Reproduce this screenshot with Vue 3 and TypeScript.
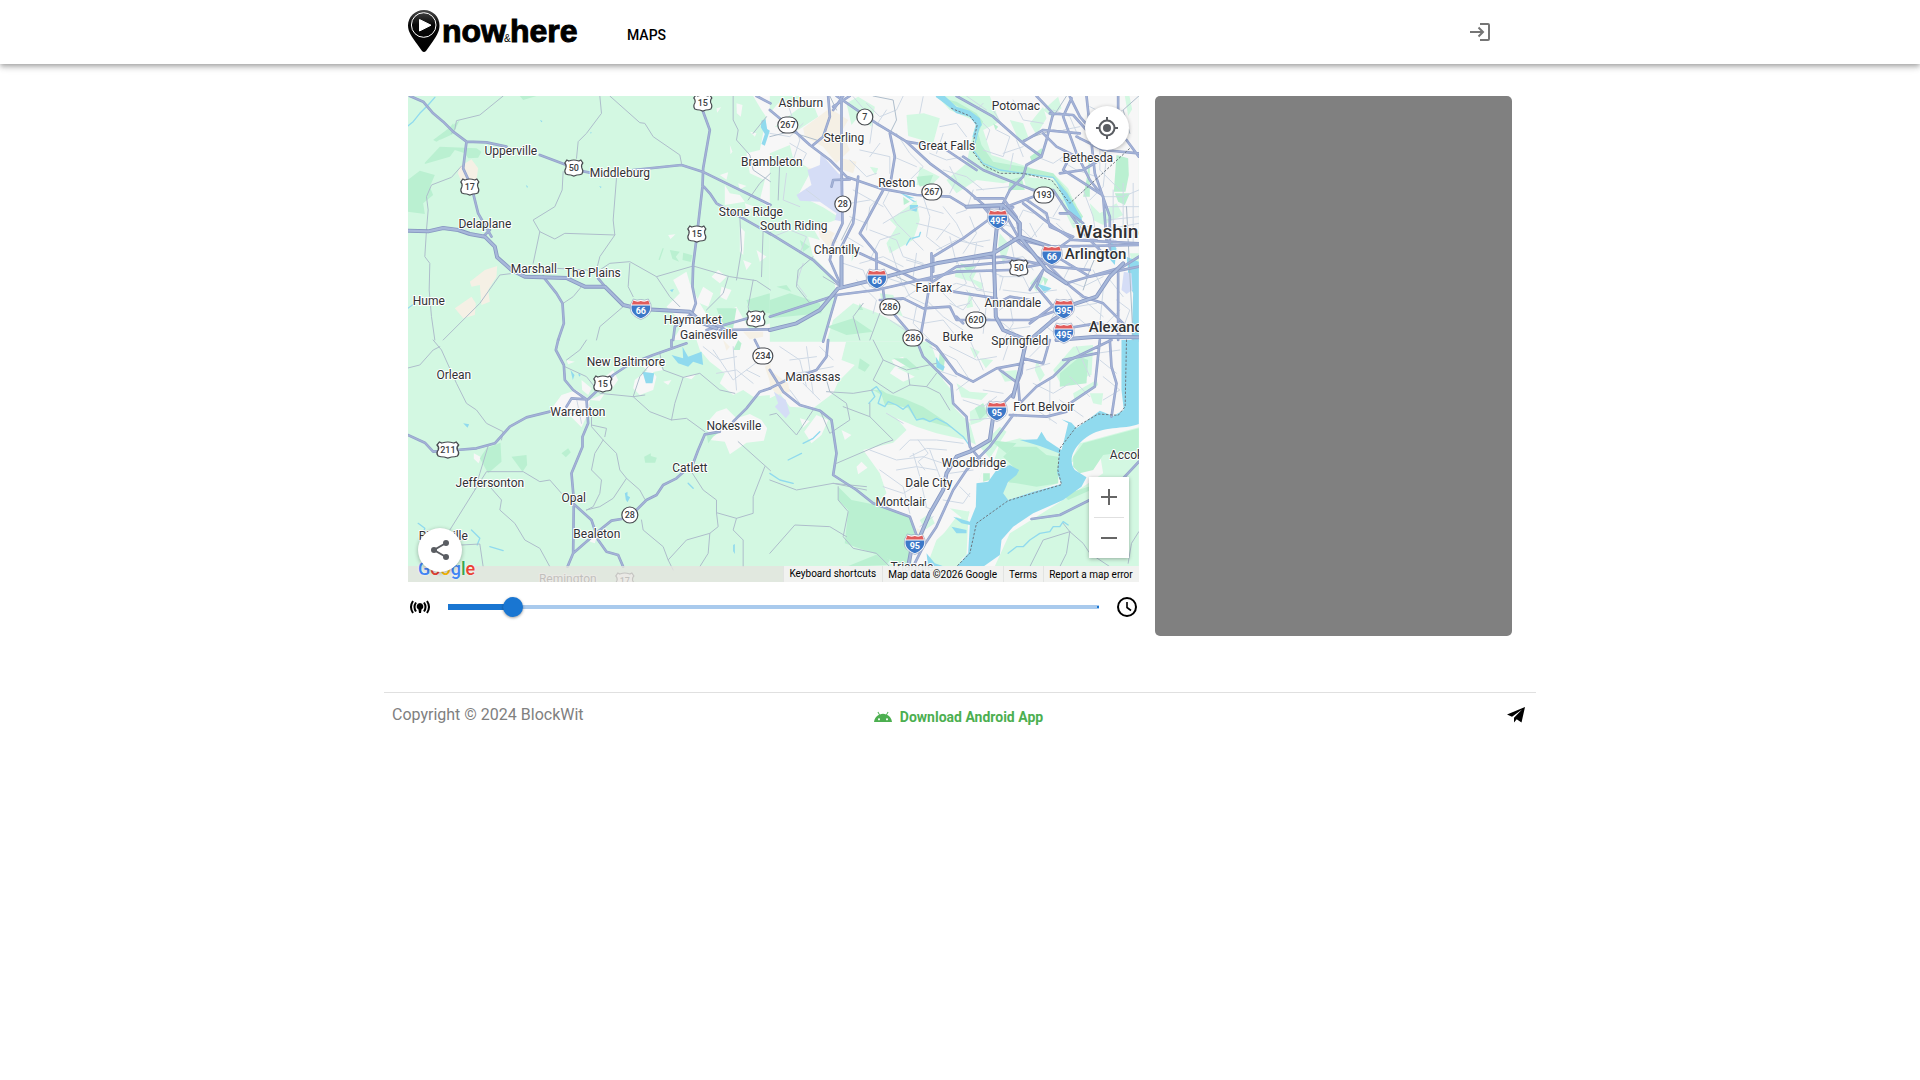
<script setup lang="ts">
import { ref } from 'vue'

type Sheet = 'nw' | 'ne' | 'sw' | 'se'
type ShieldKind = 'interstate' | 'us' | 'state'

interface Layer {
  name: string
  paths: Partial<Record<Sheet, string[]>>
}

interface Label {
  text: string
  x: number
  y: number
  size?: 'city' | 'capital'
  start?: boolean
}

interface Shield {
  kind: ShieldKind
  text: string
  x: number
  y: number
}

const range = ref(10)

/* The map is drawn in four survey sheets, each at three units to the pixel. */
const origins: Record<Sheet, string> = {
  nw: 'translate(-8 -6) scale(.33333)',
  ne: 'translate(362 -6) scale(.33333)',
  sw: 'translate(-8 244) scale(.33333)',
  se: 'translate(362 244) scale(.33333)',
}

const layers: Layer[] = [
  {
    name: 'urban',
    paths: {
      nw: [
        'M1060 18H1112V100L1085 60ZM1100 80L1112 70V360L1080 330L1095 270L1050 250L1040 190L1080 180Z',
        'M1010 40l18 5-5 35-12-10ZM950 55l14-3-12 16ZM1050 125l20 5-5 10ZM990 165l8 20-6 8ZM960 255l25-8-5 22ZM975 285l15 25 30 5 15 20-60 10ZM1015 280l25 8-20 10Z',
        'M820 750L850 700L800 650L840 610L820 570L860 545L870 580L900 640L930 690L1010 650L1050 720L1112 700V750Z',
        'M910 590l30 20-15 40-35-15ZM935 560l20-20 25 20-20 20ZM965 590l30 10-15 30-20-10ZM1020 410l15 15-5 70-10-10ZM1030 510l25 10-15 20ZM805 435l22-2-15 14ZM1070 480l30 20-20 15ZM1035 340l30 10-25 12Z',
      ],
      ne: ['M0 18H1107V755H0Z'],
      sw: [
        'M890 0H1112V165L1060 170L1030 150L1000 165L960 130L975 100L930 65L900 30Z',
        'M445 220L485 165L530 150L570 180L565 220L545 262L515 232Z',
        'M920 250L950 215L980 205L1010 235L1050 222L1085 240L1102 265L1092 302L1040 308L990 343L975 305L930 300Z',
        'M705 120l45-35 20 25-10 40-40 15-20-20ZM725 75l35-15 30 30-40 8ZM610 115l30-25 15 30-25 35ZM545 120l30 25-10 20-18-15ZM850 110l40-8-15 16ZM790 125l25-5-10 15ZM222 340l22 12-8 18-14-14ZM570 180l45-20-15 22ZM570 585l25-10-10 35-14-5ZM500 60l25 5-20 8Z',
      ],
      se: [
        'M0 0H230L215 60L255 75L205 125L190 160L130 205L60 200L30 160L0 175Z',
        'M480 0H1107V755H560L600 500L635 400L620 320L600 250L555 205L545 150L520 120L500 60Z',
        'M380 235L440 260L500 280L590 300L650 330L635 400L600 510L500 600L470 680L425 680L430 560L320 490L350 460L330 400L280 330L370 308L410 270Z',
        'M140 225l35 15-20 45-30 25-22-35ZM90 235l30 8-20 20ZM215 270l30 15-20 15ZM260 380l15-15 18 18-28 20ZM360 100l15-20 60 30-35 15ZM365 60l35-10 10 25-30 10Z',
      ],
    },
  },
  {
    name: 'meadow',
    paths: {
      ne: [
        'M0 18H90L70 55L25 40L0 70ZM0 190L60 165L70 205L125 240L85 315L160 352L212 385L130 415L150 450L115 440L130 500L190 560L200 610L160 755H0Z',
        'M170 755L190 690L250 640L325 670L400 710L430 755ZM410 75l52-5 48 15-20 75-75-22ZM230 40l35-20 50 30-10 60-40-30-20 25ZM80 60l45-30 20 50-60 40-70-10Z',
        'M500 18H660L690 95L640 120L665 195L780 232L780 260L700 280L620 270L560 310L530 270L590 220L610 130L620 95L540 60Z',
        'M850 250l45 45 45 110-30 10-50-100ZM760 260l100 10 20 55-30-15-80-15ZM780 100l40-50 10 35-30 50ZM960 340l30 30 50-30 20 35-60 30-30-15ZM720 90l40 10 15 40-25 20ZM440 330l10 60-20 60-70 40-10-30 30-50-20-20Z',
        'M690 430l30 35-20 60-15-60ZM560 530l60 15-15 30-50-15ZM590 560l50 20-5 20ZM780 580l30-30 15 15-25 40ZM600 600l10 50-20 5ZM450 230l60 30-30 30-40-5ZM330 610l40 5 30 65-60-25ZM1080 490h27v60h-15ZM820 60l45-40 10 35-30 25ZM1065 18l10 60 12-20-8-40ZM900 310l20 35-10 40-22-40ZM300 230l25 5-8 20ZM250 460l15 20-20 35Z',
      ],
      se: [
        'M560 130l40 25 55 5-20 20-60-8ZM600 20l30 15-15 20ZM630 55l40 5-22 25ZM690 95l50-5 5 30-40 5ZM600 215l40-25 22 35-30 20-30 10ZM630 320l60-60 20 15-50 80ZM690 310l60-15 120 40-5 95-150 50-25-20 40-50-60-40ZM560 530l35 15-5 100-30 25-60-60ZM900 370L930 310L1107 262V755H640L720 580L880 480L940 440L1000 400L990 340L940 350Z',
        'M870 600l80 10 60 60-130 20ZM910 160l70-40 5 15-70 50ZM850 90l60-70 60-5-5 90-90 30ZM960 160l40 0-5 35-25-5ZM450 540l30-20 15 30-30 20ZM540 505l60 10-10 30ZM800 60l25 45-15 20-15-35Z',
      ],
    },
  },
  {
    name: 'park',
    paths: {
      nw: [
        'M75 218L120 170L230 175L245 185L235 203L205 205L195 190L165 180L150 200L75 222ZM100 150L180 90L165 120L110 155Z',
        'M24 270L60 242L105 255L90 290L100 315L70 340L75 372L24 365Z',
        'M850 488l28 8-5 20-25-6ZM810 480l30 5-12 15 10 15-20-8ZM1040 630l70-20v60l-60-10ZM950 655l60 0-10 60-30-5ZM780 510l12-35-4 0-12 34Z',
        'M360 18h50l-40 12ZM160 100l-40 50 45-20Z',
      ],
      ne: [
        'M0 630L60 610L150 640L155 670L0 685ZM20 590l30-5 15 20ZM170 710l80-25 60 40-80 10ZM90 450l30 20-20 15Z',
        'M520 25L600 70L625 105L610 185L650 240L740 252L850 265L890 320L930 390L940 380L890 300L850 250L770 232L670 215L635 165L625 130L640 95L620 70L560 35ZM720 270l35-10 10 40-50 0ZM960 190l-10 80-10 50 20 0Z',
        'M1040 195l35 10 2 50-10 50-35 0ZM1035 310l45 0-15 35-20-10ZM440 260l50-5-10 25-30 10ZM780 200l35-25 8 10-35 35ZM570 520l50 10-25 15ZM670 100l15 10-8 10ZM270 640l10 20-15 0ZM400 320l20 15-18 10ZM820 560l15 8-10 20Z',
      ],
      sw: [
        'M260 325L302 308L305 365L265 400L240 355ZM335 350L380 345L382 375L368 395ZM485 340l20-15 8 12-15 15ZM733 350l20-10 0 8 18 5-5 15-30 0ZM920 280l40-5-20 15-15 20Z',
        'M1015 0l10 10-5 20-20 0Z',
      ],
      se: [
        'M205 440L245 480L320 495L420 530L440 600L410 680L340 650L225 610L235 510L205 480Z',
        'M310 150L335 165L345 195L375 195L415 205L435 235L480 245L550 265L520 240L460 200L400 175L350 160L335 150ZM370 55l40 0 40 35-30-5ZM270 55l30 20-15 20-20-10ZM510 35l15 25-5 35-15-10ZM230 680l100-40 30 20-10 15Z',
        'M730 320L800 320L830 345L865 350L865 430L800 440L740 430L700 425L740 390L700 350ZM910 350L940 310L1107 265V330L1000 345L970 390L930 400L910 380ZM880 465l75-25 20 5-80 35ZM870 100l60-50 25 10-5 70-80 10ZM660 300l80 10-30 30ZM615 205l25-15 10 30-20 20ZM640 400l20 0 0 20-20 5Z',
      ],
    },
  },
  {
    name: 'sand',
    paths: {
      nw: [
        'M180 230L215 208L235 235L230 270L185 275L174 250ZM210 575L255 540L292 528L290 560L265 600L270 635L245 645L240 585L215 590ZM165 655L215 620L228 640L225 675L190 685Z',
        'M1030 725l60 0 0 15-40 8Z',
      ],
      ne: ['M100 115L180 55L235 90L215 125L240 180L200 220L160 170L105 140ZM215 205l45 10-10 35-30-10ZM145 405l50 25-10 15 20 10-30 15-25-30ZM110 230l30 10-10 15Z'],
      sw: ['M970 0l20 20-10 12ZM1095 80l17-10v60Z'],
      se: ['M0 90L55 130L60 155L20 165L0 135Z', 'M440 565l25 10-15 35Z'],
    },
  },
  {
    name: 'field',
    paths: {
      ne: [
        'M152 190L205 250L222 262L220 395L195 390L200 370L150 335L90 332L80 315L125 285L113 240L150 225Z',
        'M1010 450h30v20h-30Z',
      ],
      se: ['M12 155L25 190L15 200L48 235L60 220L48 180Z'],
    },
  },
  {
    name: 'water',
    paths: {
      nw: ['M1085 92l12-5 5 30 8 5-15 45-10-5 10-30-12-20ZM378 285l6 4-2 6ZM598 288l7 2-2 5ZM420 90l8 3-3 4ZM572 125l4 3-4 3ZM810 600l12-3-5 10Z'],
      ne: [
        'M498 18H525L560 50L600 62L630 85L636 105L620 125L622 150L608 140L618 105L600 80L560 70ZM860 275L890 310L905 335L935 385L930 400L900 365L870 300ZM1070 500L1107 515V755H1085L1090 610L1072 570L1075 540ZM1025 455l15 20-5 50-18-20Z',
        'M385 305l50 20-20 0ZM420 345l25 0-5 20-20-5ZM410 320l30 15-10 0ZM800 580l45 15-20 15Z',
      ],
      sw: ['M815 45L850 55L848 20L865 50L905 35L910 75L880 65L865 80L835 70ZM728 95l35 5-5 30-20 0ZM675 460l8-5 0 12 8 5-8 15-5-8ZM512 90l12 15-5 15ZM535 100l8 5-5 5ZM190 250l18 3-5 10ZM1000 615l5-3 0 30-5-8Z'],
      se: [
        'M1055 0H1107V252C1060 270 1000 255 950 292C905 325 895 365 915 390L950 412L935 440L880 480L790 520L730 560L695 600L690 645L640 680H560L595 640L600 555L575 550L550 530L600 545L618 500L620 430L655 425L680 390L720 375L748 390L740 405L715 425L700 460L715 480L790 455L875 432L862 400L868 340L810 318L750 300L802 298L815 275L830 300L875 330L885 292L895 250L875 238L905 248L920 265L960 235L990 212L1030 228L1062 210L1055 150ZM470 640l25 30 30 10h-50Z',
        'M498 50l12 20 15 10-5 12-20-10ZM545 560l45 10 0 10-30 0Z',
      ],
    },
  },
  {
    name: 'field',
    paths: {
      ne: ['M1062 545L1085 550L1088 600L1070 612L1055 600Z'],
    },
  },
  {
    name: 'creek',
    paths: {
      nw: ['M24 108L40 95L60 70L85 45L105 22', 'M24 655L45 640'],
      ne: ['M500 20L560 62L610 82L628 110L610 180L640 220L690 240L760 250L850 262L890 310L935 390', 'M410 465l10-18 28-8 4-12'],
      sw: ['M55 550l20 15-5 15 20 5M215 570l25 25-8 20M865 430l15 15M270 620l40 12'],
      se: [
        'M297 190L315 170L305 150L320 140L335 160L325 190L345 200L355 185L380 195L400 208L415 195L440 240L460 235L480 245L500 235L530 250L580 290L605 325',
        'M895 555L880 545L870 560L850 560L840 575L810 580L780 600L760 620L740 620L715 640',
        'M0 400l30 20 40 10M100 310l30-15 20-20M55 360l40-20',
      ],
    },
  },
  {
    name: 'street',
    paths: {
      ne: [
        'M0 130L60 140L100 100M50 30L90 150L70 210M250 20L310 90L300 160M270 180L360 200L360 250M240 210L290 260L320 250M290 40L330 80L380 60L400 18M330 160L300 200M380 130L420 190L460 230L420 270M370 200L440 230M350 60l-30 45 40 20',
        'M460 20L450 70M510 110L560 100L590 140M480 190L530 210L580 200M520 240L590 260L640 300M610 300L590 360L560 370M540 230L560 270L540 310M620 300L720 290M640 180L700 200L720 140L680 120M700 110L670 60M700 190L760 170M590 18L650 60M640 100L660 120L650 150',
        'M340 310L300 350L290 420M360 300L340 340L380 400L460 480M300 420L380 450L400 500L460 520M340 400L390 370L450 350L520 370M460 320L480 380L470 440L520 480M520 350L560 400L580 440M440 400L520 420L600 460L660 450M500 480L560 450L640 470M390 430L330 450L300 510M240 340L300 330M250 300L340 350M270 520L340 500L400 530M360 470L400 590M540 400L500 450M600 380L620 430L580 490',
        'M220 520L280 540L300 590M230 440L280 470M50 250L40 330L90 350M60 160L110 190L90 230M110 300L150 330M10 440L60 420L110 440L90 490M100 520L80 580L110 620',
        'M690 400L760 420L800 460M700 510L760 500L790 540M690 560L760 560L780 600M720 440L740 540M640 490L600 560L620 600L680 610M700 600L780 610L860 600M610 620L580 660L540 640M690 660L740 620L770 640M500 600L560 580L640 600M340 560L400 580L420 620L480 650M380 640L440 600M470 630L520 680L580 720M520 610L560 650L600 640M400 680L460 700L520 690L560 740M640 680L700 700L760 750M700 720L780 710M630 550L650 640L640 730M560 510L590 580L540 610',
        'M800 200L850 220L880 200M760 200L740 150M850 60L900 80L930 150M780 330L830 380L870 390M870 210L920 240L980 260M880 120L930 110M990 150L990 240L1050 300M1010 200L1000 290L960 330M910 400L1000 420L1107 400M940 300L970 380L980 450M1000 320L1060 320L1107 300M1010 350H1107M1010 390L1107 380M1030 300V460M1060 280V420M1090 280V460M980 120L1030 100L1070 120M960 50L1020 80L1060 60M790 370L760 360L740 400M820 400L780 450M850 490L900 530L880 570M860 560L940 590L1000 560M890 600L920 650L980 640M830 620L860 660L830 710L880 750M930 620L1000 680M970 540L1000 600L990 700M1020 570L1060 620M920 680L980 730M1040 630L1080 660L1050 740M970 480L940 540',
        'M260 570L320 630L310 670M440 490L430 560M240 380L290 400M410 510L480 530M540 440L560 520M620 460L610 520M650 540L700 560L690 600M780 400L800 440M860 400L900 440M730 190L720 240M880 330L850 380M1000 500L1050 490M1050 660L1000 710M590 600L630 660L600 700M720 640L730 700L700 750M440 650L430 700L480 750M360 690L420 730M560 160L600 170M520 130L500 190M640 40L620 60M730 30L760 90L820 100',
      ],
      se: [
        'M30 20L90 60L110 140M60 60L140 50M80 100L190 80M100 130L150 180M110 20L130 160M60 150L90 190M150 20L190 60M480 20L560 60L600 120L560 150M500 90L560 110M540 20L620 60L680 50M600 0L640 90M640 150L700 160M580 180L640 200L680 170M600 240L660 235M720 0L700 60M700 90L740 130M770 90L840 70M780 50L830 0M790 130L850 160L900 130M840 120V240M870 180L940 230M900 110L960 170M920 20L960 110M980 40L1050 30M1000 110L1050 150L1000 180M990 60L1040 100M800 210L860 250',
        'M300 330L380 360L460 350L520 370M390 330L420 300L500 300L580 310M380 390L440 380L500 390M340 440L400 460L470 420M330 390L400 440L420 520M430 340L450 410L470 500M480 330L510 410M520 480L580 490L600 460M570 440L600 470M440 490L490 510M540 400L610 390M450 560L490 530M400 250L350 220M420 350l50-25 60 5M445 300l30 40-30 25 20 25',
      ],
      sw: ['M910 20L960 60L1010 50M950 100L1010 90L1060 130M940 30L1000 120L1080 60M1000 20L1010 150M1040 90L1080 110M530 175L545 250M500 215L540 230'],
    },
  },
  {
    name: 'lane',
    paths: {
      nw: [
        'M310 18L240 75L170 92L165 118L155 130M600 18L605 70L560 130L535 155L530 205M490 245L487 300L465 350L400 390L420 425L400 520M420 425L465 447L495 430L645 435L640 390L650 265M645 435L600 500L590 540M630 18L720 98L735 100L760 140L840 195L845 220',
        'M185 228L155 262L95 285L80 320L85 360L80 420L75 500L90 520L88 600L95 680L105 750M130 750L190 690L240 640L300 555L340 550M470 535L560 540L600 555M600 540L630 520L690 515L770 560L880 528M770 560L810 620L840 650M690 520L685 590L700 620M670 650L600 710L590 750M545 590L520 620L490 640M985 560L970 610L920 660M1060 570L1045 650L1050 680M1000 18L1000 90L1015 120L1010 150L1050 195L1060 240L1112 275M1045 330L1080 280L1112 250M880 528L990 560L1070 572L1112 600M1100 80L1060 130M1020 380L1025 480L1010 570M1090 420L1085 560',
      ],
      ne: [
        'M0 140L60 125L140 150M30 210L25 330M310 18L370 30L380 90L360 130M180 18L200 60M260 290L250 380L215 450M130 500L85 540L80 590L120 640M280 640L250 680L270 750M330 670L300 750M160 560L210 590M380 560L440 590',
        'M1107 18L1060 60L1080 130M890 18L850 80M760 150L850 120L930 130M1070 350L1090 750M990 470L960 540L940 600',
      ],
      sw: [
        'M100 0L125 30L170 130L200 190L230 210L260 250L310 275L305 300M24 84L60 75L100 30L120 20M265 318L240 400L225 450L150 570M225 450L260 395L370 395L420 425L450 420L485 460M270 440L305 480L300 510L345 550L375 600L420 625L450 680',
        'M500 60L540 30L560 0M495 80L560 110L600 160L700 170L750 215L815 240L860 235L915 275M735 165L700 170M850 112L825 190L815 240M780 40L790 90L850 112L900 100L960 150L1005 160M610 300L585 340L575 390L605 420L600 460L580 500L560 510M575 210V260L610 300L650 340L660 390L680 415L720 450L735 478M680 415L640 475L600 500L560 510M575 255L620 265L615 290',
        'M1015 305L1112 392M1095 380L1060 470L1060 520L1010 535L950 518M878 400L910 450L950 480L950 518L955 560L930 580L860 600L805 660L820 690M725 540L730 570L790 620L805 660M930 580L925 640L900 680M1010 535L1000 570L1030 600L1030 680M185 615L240 612L250 680M700 170L720 110L745 80',
      ],
      se: [
        'M130 210L80 285L20 220L0 225M150 210L180 280L240 240L230 190L180 155L170 120M220 200L300 230L370 300L340 310L200 370M170 155L250 160L310 150M310 0L340 60L410 90L500 70M340 60L310 120L370 160L420 135L470 140L500 100M300 230L300 190M420 135L415 100M470 140L510 160L540 210M205 440L205 480L235 515L220 590L250 625L320 640L360 680M0 420L80 450L190 430L290 440M0 640L75 555L180 560L230 590M190 430L290 450',
        'M900 575L820 600L780 680M900 575L890 640L870 680M900 575L940 610L960 640L1020 680M900 575L880 550M1107 575L1085 610L1075 670',
      ],
    },
  },
  {
    name: 'road',
    paths: {
      nw: [
        'M30 18L70 35L100 70L130 95L160 125L200 155L190 235L215 290L235 370L275 440M200 155L260 157L320 170M420 195L500 225M545 243L570 248M700 240L845 225L908 245L1112 345M908 60L930 120L910 235L908 290L892 430L880 525L878 590L888 640L875 675M912 290L930 310L950 340L1112 432',
        'M430 560L470 610L488 640L492 700L475 750M595 565L620 595M920 720L1060 680M960 720L1112 718M820 750L825 710L870 675M250 440L270 420M1070 18L1112 40M940 700L1000 730',
      ],
      ne: [
        'M0 60L60 110L120 165L180 210L230 260L330 295L440 315L540 320L590 350L730 352M175 18L180 80L160 140L130 165M190 60L220 18M215 18L215 240L218 400L190 460L180 510L215 590M200 18L320 100L410 155L480 220L590 300L660 360',
        'M340 300L270 430L320 490L320 550M265 260L250 400L215 470M360 130L375 200L360 290M270 490L380 540L440 570L480 570M0 430L130 510L215 590M0 680L200 615L320 600L560 545L720 540',
        'M490 545L490 500L580 445L655 390M560 18L670 80L760 160L815 200M800 18L850 70L830 150L815 200L770 225L760 260L720 300L695 350M580 200L640 240L700 265L790 300M760 155L820 120L930 130M840 70L910 75L950 120M900 20L930 80L1000 160M905 25L880 80L920 190L960 270L1000 320L1010 450M950 18L975 250L1020 380V480',
        'M900 200L880 240L990 310M870 250L940 240L990 210M790 300L850 300L890 360L940 400M710 350L790 320M760 340L850 410L910 450L1107 460M615 325H700L740 380L750 440M640 350L700 420L800 500L850 530L960 540M700 360L750 450M750 450L840 470L1107 465M560 510L700 500L800 520L900 450L980 450',
        'M485 490V570M550 605L680 625M720 540L830 520L890 580L940 620L1000 640L1060 700M780 600L820 540L800 590L850 650M830 520L860 500L960 560L1107 530M890 580L1060 530L1107 500M650 690L780 690L880 655M680 640L720 620L780 630M620 690L560 690L540 650L460 655L400 625L330 630M340 600L345 640L430 740M560 680L580 700M480 580L470 640L450 750M1045 18V160M1045 540V750M860 720L980 700L1060 720M780 700L860 640',
        'M160 755L200 615M190 270L185 290M190 270L240 268M240 18L190 50M1070 150L1107 200M920 140L1000 180L1107 190M770 330L830 370L840 410L910 440M870 370L900 370L950 440L1000 490M820 130L860 170L920 200M410 155L470 165M530 180L620 240M480 580L560 530L720 515',
      ],
      sw: [
        'M24 285L75 308L100 335L170 330L230 325L285 310L330 260L380 232L450 215M500 200L515 175L560 178M565 178L600 145L640 105L690 72L760 45L860 10M475 0L468 30L492 75L495 120L520 150L560 178L565 250L548 290L548 320L515 400L522 480L520 640L503 680M525 495L575 540L595 600L620 635L655 645L670 680M520 640L600 570L635 542L665 537M710 510L740 480L770 465L790 435L830 415L880 370L895 330L915 283L960 275M1000 245L1040 205L1080 155L1112 145M815 0V20M1065 0L1080 30',
      ],
      se: [
        'M0 90L40 155L90 195L150 212L185 240L200 340L190 405L260 450L310 490L420 530L440 585M60 120L140 90L170 50L175 0M0 145L50 120M440 0L460 50L545 135L550 190L590 230L600 320L640 370M470 0L500 20L560 100L610 125L680 85L760 70M765 0L755 100L730 160L700 190M690 90L745 130L750 190L800 140L850 110L900 60L1025 0M990 0L975 140L900 190M1020 0L1025 80L1040 130L1025 230M720 225L830 230L890 215M760 55L820 70L840 0M730 225L660 320L590 390L550 450L500 560L460 620L430 680',
        'M785 537L870 525L960 480M1060 415L1107 365M880 60L980 40',
      ],
    },
  },
  {
    name: 'freeway',
    paths: {
      nw: ['M24 422L85 424L130 414L175 420L210 432L255 440L285 470L292 502L335 540L375 560L500 564L555 590L615 590L670 645L700 652M740 658L870 665L910 700L950 715'],
      ne: ['M0 720L80 700L150 660L205 595L330 565L500 520L670 490L750 440L870 480M695 350L680 420L672 500L678 680L700 720L770 750M590 350L700 345L750 400L750 440M750 440L790 490L830 540L890 580M1060 520L1020 560L980 620L890 650M880 670L850 690L780 750M860 750L980 740L1107 742M215 590V500'],
      se: ['M770 0L750 90L730 170M670 230L660 300L600 335L560 350L530 400L520 450L480 520L450 590L445 600M430 600L415 680'],
    },
  },
]

const sheetNames: Sheet[] = ['nw', 'ne', 'sw', 'se']

const boundaries: Partial<Record<Sheet, string>> = {
  ne: 'M545 55L600 78L622 105L605 180L640 225L690 250L760 250L845 270L900 340L1080 175',
  se: 'M1070 0L1066 200L1045 226L985 222L920 260L870 325L864 390L875 434L715 482L620 550L600 640L560 680',
}

const shields: Shield[] = [
  { kind: 'us', text: '15', x: 295, y: 7 },
  { kind: 'us', text: '50', x: 166, y: 72 },
  { kind: 'us', text: '17', x: 62, y: 91 },
  { kind: 'us', text: '15', x: 289, y: 138 },
  { kind: 'us', text: '29', x: 348, y: 223 },
  { kind: 'us', text: '50', x: 611, y: 172 },
  { kind: 'us', text: '15', x: 195, y: 288 },
  { kind: 'us', text: '211', x: 40, y: 354 },
  { kind: 'us', text: '17', x: 217, y: 485 },
  { kind: 'state', text: '267', x: 380, y: 29 },
  { kind: 'state', text: '7', x: 457, y: 21 },
  { kind: 'state', text: '28', x: 435, y: 108 },
  { kind: 'state', text: '267', x: 524, y: 96 },
  { kind: 'state', text: '193', x: 636, y: 99 },
  { kind: 'state', text: '286', x: 482, y: 211 },
  { kind: 'state', text: '620', x: 568, y: 224 },
  { kind: 'state', text: '286', x: 505, y: 242 },
  { kind: 'state', text: '234', x: 355, y: 260 },
  { kind: 'state', text: '28', x: 222, y: 419 },
  { kind: 'interstate', text: '66', x: 233, y: 213 },
  { kind: 'interstate', text: '495', x: 590, y: 123 },
  { kind: 'interstate', text: '66', x: 644, y: 159 },
  { kind: 'interstate', text: '66', x: 469, y: 183 },
  { kind: 'interstate', text: '395', x: 656, y: 213 },
  { kind: 'interstate', text: '495', x: 656, y: 237 },
  { kind: 'interstate', text: '95', x: 589, y: 315 },
  { kind: 'interstate', text: '95', x: 507, y: 448 },
]

const labels: Label[] = [
  { text: 'Upperville', x: 103, y: 59 },
  { text: 'Middleburg', x: 212, y: 81 },
  { text: 'Delaplane', x: 77, y: 132 },
  { text: 'Marshall', x: 126, y: 177 },
  { text: 'The Plains', x: 185, y: 181 },
  { text: 'Hume', x: 21, y: 209 },
  { text: 'Haymarket', x: 285, y: 228 },
  { text: 'Gainesville', x: 301, y: 243 },
  { text: 'Stone Ridge', x: 343, y: 120 },
  { text: 'Brambleton', x: 364, y: 70 },
  { text: 'Ashburn', x: 393, y: 11 },
  { text: 'Sterling', x: 436, y: 46 },
  { text: 'Great Falls', x: 539, y: 54 },
  { text: 'Potomac', x: 608, y: 14 },
  { text: 'Bethesda', x: 680, y: 66 },
  { text: 'Reston', x: 489, y: 91 },
  { text: 'South Riding', x: 386, y: 134 },
  { text: 'Chantilly', x: 429, y: 158 },
  { text: 'Fairfax', x: 526, y: 196 },
  { text: 'Annandale', x: 605, y: 211 },
  { text: 'Washington', x: 668, y: 142, size: 'capital', start: true },
  { text: 'Arlington', x: 657, y: 163, size: 'city', start: true },
  { text: 'Alexandria', x: 681, y: 236, size: 'city', start: true },
  { text: 'Burke', x: 550, y: 245 },
  { text: 'Springfield', x: 612, y: 249 },
  { text: 'Orlean', x: 46, y: 283 },
  { text: 'New Baltimore', x: 218, y: 270 },
  { text: 'Warrenton', x: 170, y: 320 },
  { text: 'Nokesville', x: 326, y: 334 },
  { text: 'Jeffersonton', x: 82, y: 391 },
  { text: 'Opal', x: 166, y: 406 },
  { text: 'Catlett', x: 282, y: 376 },
  { text: 'Bealeton', x: 189, y: 442 },
  { text: 'Rixeyville', x: 11, y: 444, start: true },
  { text: 'Remington', x: 160, y: 487 },
  { text: 'Manassas', x: 405, y: 285 },
  { text: 'Woodbridge', x: 566, y: 371 },
  { text: 'Dale City', x: 521, y: 391 },
  { text: 'Montclair', x: 493, y: 410 },
  { text: 'Fort Belvoir', x: 636, y: 315 },
  { text: 'Accokeek', x: 702, y: 363, start: true },
  { text: 'Triangle', x: 504, y: 475 },
]
</script>

<template>
  <div class="page">
    <header class="header">
      <div class="header-inner">
        <a class="logo" href="#" aria-label="now&amp;here">
          <svg width="172" height="44" viewBox="0 0 172 44">
            <defs>
              <linearGradient id="pin-shade" x1="0" y1="0" x2="0" y2="1">
                <stop offset="0" stop-color="#4a4a4a" />
                <stop offset=".35" stop-color="#080808" />
                <stop offset="1" stop-color="#000" />
              </linearGradient>
            </defs>
            <path d="M16 0C7 0 0 7 0 15.500C0 22 4 27 9 34L14 41Q16 43 18 41L23 34C28 27 31.500 22 31.500 15.500C31.500 7 25 0 16 0Z" fill="url(#pin-shade)" />
            <circle cx="15.700" cy="15" r="12.300" fill="none" stroke="#fff" stroke-width="1" />
            <path d="M11.500 9.500L23 15.200L11.500 21Z" fill="#fff" stroke="#fff" stroke-linejoin="round" />
            <text class="wordmark" x="34" y="32">now</text>
            <text class="ampersand" x="96" y="32">&amp;</text>
            <text class="wordmark" x="102" y="32">here</text>
          </svg>
        </a>
        <nav><a class="nav-link" href="#">MAPS</a></nav>
        <button class="login" type="button" aria-label="Log in">
          <svg width="20" height="18" viewBox="0 0 20 18" fill="none" stroke="#757575" stroke-width="2">
            <path d="M10 1H18Q19 1 19 2V16Q19 17 18 17H10M0 9H13M8.500 4.500L13 9L8.500 13.500" />
          </svg>
        </button>
      </div>
    </header>

    <main class="content">
      <section class="column column-map">
        <div class="map">
          <svg class="map-canvas" viewBox="0 0 731 486" preserveAspectRatio="xMidYMid slice">
            <rect width="731" height="486" fill="#d3f8e2" />
            <g v-for="(layer, n) in layers" :key="n" :class="layer.name">
              <g v-for="name in sheetNames" :key="name" :transform="origins[name]">
                <path v-for="(d, i) in layer.paths[name] ?? []" :key="i" :d="d" />
                <template v-if="layer.name === 'freeway' || layer.name === 'road'">
                  <path v-for="(d, i) in layer.paths[name] ?? []" :key="'in' + i" class="inner" :d="d" />
                </template>
              </g>
            </g>
            <g class="boundary">
              <path v-for="(d, name) in boundaries" :key="name" :d="d" :transform="origins[name as Sheet]" />
            </g>
            <g v-for="(s, i) in shields" :key="i" :transform="`translate(${s.x} ${s.y})`">
              <g v-if="s.kind === 'interstate'">
                <path d="M-7.500-10Q-4-8 0-9.500Q4-8 7.500-10Q11-5 10.500 0C10 5 6 8 0 10.500C-6 8-10 5-10.500 0Q-11-5-7.500-10Z" fill="#fff" stroke="#8795b5" stroke-width=".6" />
                <path d="M-9.200-3.500H9.200C10.500 4 5 7 0 9.300C-5 7-10.500 4-9.200-3.500Z" fill="#3c78c8" />
                <path d="M-7.500-8.500Q-4-6.500 0-8Q4-6.500 7.500-8.500L9-4.500H-9Z" fill="#e05c5c" />
                <text class="shield-text light" y="5">{{ s.text }}</text>
              </g>
              <g v-else-if="s.kind === 'us'">
                <path
                  :transform="s.text.length > 2 ? 'scale(1.2 1)' : undefined"
                  d="M-7-8L-5-7Q-2-8 0-8Q2-8 5-7L7-8L9-5Q7-3 8 0Q10 3 8 6Q6 7 3 7L0 8L-3 7Q-6 7-8 6Q-10 3-8 0Q-7-3-9-5Z"
                  fill="#fff"
                  stroke="#484b50"
                  stroke-width="1.200"
                />
                <text class="shield-text" y="3">{{ s.text }}</text>
              </g>
              <g v-else>
                <rect
                  :x="s.text.length > 2 ? -10 : -8"
                  y="-8"
                  :width="s.text.length > 2 ? 20 : 16"
                  height="16"
                  rx="8"
                  fill="#fff"
                  stroke="#484b50"
                  stroke-width="1.200"
                />
                <text class="shield-text" y="3">{{ s.text }}</text>
              </g>
            </g>
            <text
              v-for="label in labels"
              :key="label.text"
              :class="['place', label.size, { start: label.start }]"
              :x="label.x"
              :y="label.y"
            >{{ label.text }}</text>
          </svg>

          <div class="attribution">
            <button type="button">Keyboard shortcuts</button>
            <span>Map data ©2026 Google</span>
            <a href="#">Terms</a>
            <a href="#">Report a map error</a>
          </div>
          <a class="google" href="#" aria-label="Google">
            <span class="blue">G</span><span class="red">o</span><span class="yellow">o</span><span class="blue">g</span><span class="green">l</span><span class="red">e</span>
          </a>
          <button class="round locate" type="button" aria-label="My location">
            <svg width="22" height="22" viewBox="0 0 22 22" fill="none" stroke="#5a5d62" stroke-width="2">
              <circle cx="11" cy="11" r="7.500" />
              <circle cx="11" cy="11" r="4" fill="#5a5d62" stroke="none" />
              <path d="M11 0V4M11 18V22M0 11H4M18 11H22" />
            </svg>
          </button>
          <button class="round share" type="button" aria-label="Share">
            <svg width="20" height="22" viewBox="0 0 20 22" fill="#5a5d62">
              <path d="M16 4L4 11L16 18" fill="none" stroke="#5a5d62" stroke-width="2" />
              <circle cx="16" cy="4" r="3" /><circle cx="4" cy="11" r="3" /><circle cx="16" cy="18" r="3" />
            </svg>
          </button>
          <div class="zoom">
            <button type="button" aria-label="Zoom in">
              <svg width="16" height="16" viewBox="0 0 16 16"><path d="M0 8H16M8 0V16" stroke="#666" stroke-width="2" /></svg>
            </button>
            <button type="button" aria-label="Zoom out">
              <svg width="16" height="16" viewBox="0 0 16 16"><path d="M0 8H16" stroke="#666" stroke-width="2" /></svg>
            </button>
          </div>
        </div>

        <div class="timeline">
          <svg width="24" height="24" viewBox="0 0 24 24" fill="none" stroke="#000" stroke-width="2">
            <path d="M5 6Q1 12 5 18M19 6Q23 12 19 18M8 7.500Q5 12 8 16.500M16 7.500Q19 12 16 16.500" />
            <path d="M12 8A3.500 3.500 0 0 1 13.500 14.600L13 18H11L10.500 14.600A3.500 3.500 0 0 1 12 8Z" fill="#000" stroke="none" />
          </svg>
          <div class="track" :style="{ '--filled': range + '%' }">
            <input v-model.number="range" type="range" min="0" max="100" aria-label="Time range" />
          </div>
          <svg width="24" height="24" viewBox="0 0 24 24" fill="none" stroke="#000" stroke-width="2">
            <circle cx="12" cy="12" r="9" />
            <path d="M12 7V12.500L16 15.500" stroke-width="1.600" />
          </svg>
        </div>
      </section>
      <section class="column column-panel">
        <div class="panel"></div>
      </section>
    </main>

    <footer class="footer">
      <span class="copyright">Copyright © 2024 BlockWit</span>
      <a class="download" href="#">
        <svg width="18" height="18" viewBox="0 0 18 18" fill="#4caf50">
          <path fill-rule="evenodd" d="M0 14Q.5 9 5 6.800L3.500 4.200L4.300 3.800L5.900 6.400Q9 5.200 12.100 6.400L13.700 3.800L14.500 4.200L13 6.800Q17.500 9 18 14ZM5 10.200a1 1 0 1 0 .01 0ZM13 10.200a1 1 0 1 0 .01 0Z" />
        </svg>
        Download Android App
      </a>
      <a class="telegram" href="#" aria-label="Telegram">
        <svg width="18" height="16" viewBox="0 0 18 16">
          <path d="M18 0L0 7.500L5 9.700L15 2.500L7 10.700V15.500L9.700 12.200L14.500 15.500Z" />
        </svg>
      </a>
    </footer>
  </div>
</template>

<style>
body {
  margin: 0;
  background: #fff;
}
</style>

<style scoped>
.page {
  font-family: Roboto, 'Liberation Sans', sans-serif;
  font-size: 14px;
  line-height: 20px;
  color: #000;
}
.page *,
.page *::before {
  box-sizing: border-box;
}
a {
  color: inherit;
  text-decoration: none;
}
button {
  display: flex;
  align-items: center;
  justify-content: center;
  padding: 0;
  border: 0;
  background: none;
  font: inherit;
  color: inherit;
  cursor: pointer;
}
svg {
  display: block;
  flex: none;
}
.header {
  box-shadow:
    0 2px 4px -1px rgba(0, 0, 0, 0.2),
    0 4px 5px rgba(0, 0, 0, 0.14),
    0 1px 10px rgba(0, 0, 0, 0.12);
}
.header-inner {
  display: flex;
  align-items: center;
  max-width: 1152px;
  height: 64px;
  margin: 0 auto;
  padding: 0 24px;
}
.wordmark {
  font: bold 32px 'Liberation Sans', sans-serif;
  stroke: #000;
  stroke-width: 1px;
}
.ampersand {
  font: 10px 'Liberation Sans', sans-serif;
}
nav {
  flex: 1;
  margin: 6px 0 0 47px;
}
.nav-link {
  font-weight: 500;
}
.login {
  margin-right: 22px;
}
.content {
  display: flex;
  max-width: 1152px;
  margin: 0 auto;
  padding: 32px 16px 56px;
}
.column {
  min-width: 0;
  padding: 0 8px;
}
.column-map {
  flex: 0 0 66.6667%;
}
.column-panel {
  flex: 0 0 33.3333%;
}
.panel {
  height: 100%;
  min-height: 540px;
  border-radius: 5px;
  background: #808080;
}
.map {
  position: relative;
  height: 486px;
  overflow: hidden;
}
.map-canvas {
  width: 100%;
  height: 100%;
}
.urban { fill: #f7f7f7; }
.meadow { fill: #d3f8e2; }
.park { fill: #baf0d1; }
.sand { fill: #f5f0e5; }
.field { fill: #d5ddf6; }
.water { fill: #90daee; }
.creek,
.street,
.lane,
.road,
.freeway,
.boundary {
  fill: none;
  stroke-linecap: round;
  stroke-linejoin: round;
}
.creek { stroke: #90daee; stroke-width: 4px; }
.street { stroke: #cfd9e5; stroke-width: 3px; }
.lane { stroke: #aebdcb; stroke-width: 3px; }
.road { stroke: #93a2ca; stroke-width: 8px; }
.road .inner { stroke: #a4b3d7; stroke-width: 4px; }
.freeway { stroke: #8797c1; stroke-width: 12px; }
.freeway .inner { stroke: #a7b8da; stroke-width: 7px; }
.boundary { stroke: #6c7780; stroke-width: 3px; stroke-dasharray: 5 7; }
.place {
  font-size: 12px;
  fill: #303134;
  stroke: #fff;
  stroke-width: 2px;
  stroke-linejoin: round;
  paint-order: stroke;
  text-anchor: middle;
}
.place.start {
  text-anchor: start;
}
.place.city {
  font-size: 15px;
  font-weight: 500;
}
.place.capital {
  font-size: 19px;
  font-weight: 500;
}
.shield-text {
  font-size: 9px;
  font-weight: 500;
  fill: #3c4043;
  text-anchor: middle;
}
.shield-text.light {
  font-weight: 700;
  fill: #fff;
}
.attribution {
  position: absolute;
  right: 0;
  bottom: 0;
  left: 0;
  display: flex;
  justify-content: flex-end;
  height: 16px;
  background: rgba(229, 227, 223, 0.8);
  font-size: 10px;
  line-height: 18px;
}
.attribution > * {
  height: 16px;
  padding: 0 6px 0 5px;
  border-left: 1px solid #e2e4e2;
  background: rgba(245, 245, 245, 0.75);
  white-space: nowrap;
}
.google {
  position: absolute;
  bottom: 3px;
  left: 10px;
  display: flex;
  font-size: 18px;
  font-weight: 500;
  line-height: 20px;
  text-shadow: 0 0 2px #fff;
}
.blue { color: #4285f4; }
.red { color: #ea4335; }
.yellow { color: #fbbc04; }
.green { color: #34a853; }
.round {
  position: absolute;
  width: 44px;
  height: 44px;
  border-radius: 50%;
  background: #fff;
  box-shadow: 0 1px 4px rgba(0, 0, 0, 0.3);
}
.locate {
  top: 10px;
  right: 10px;
}
.share {
  bottom: 10px;
  left: 10px;
}
.zoom {
  position: absolute;
  right: 10px;
  bottom: 24px;
  width: 40px;
  padding: 0 5px;
  background: #fff;
  box-shadow: 0 1px 4px rgba(0, 0, 0, 0.3);
}
.zoom button {
  width: 100%;
  height: 40px;
}
.zoom button + button {
  height: 41px;
  border-top: 1px solid #e0e0e0;
}
.timeline {
  display: flex;
  align-items: center;
  height: 50px;
}
.track {
  flex: 1;
  height: 20px;
  margin: 0 16px;
  background:
    linear-gradient(#1976d2, #1976d2) left center / var(--filled) 6px no-repeat,
    linear-gradient(#1976d2, #1976d2) right center / 2px 2px no-repeat,
    linear-gradient(#a9caed, #a9caed) left center / 100% 4px no-repeat;
}
.track input {
  display: block;
  width: calc(100% + 20px);
  height: 20px;
  margin: 0 -10px;
  appearance: none;
  background: none;
}
.track input::-webkit-slider-thumb {
  width: 20px;
  height: 20px;
  border-radius: 50%;
  appearance: none;
  background: #1976d2;
  box-shadow: 0 1px 3px rgba(0, 0, 0, 0.4);
}
.footer {
  display: grid;
  grid-template-columns: 1fr auto 1fr;
  align-items: center;
  max-width: 1152px;
  height: 45px;
  margin: 0 auto;
  padding: 0 11px 0 8px;
  border-top: 1px solid #e0e0e0;
}
.copyright {
  font-size: 16px;
  color: #808080;
}
.download {
  display: flex;
  align-items: center;
  gap: 8px;
  padding-top: 4px;
  font-weight: 700;
  color: #4caf50;
}
.telegram {
  justify-self: end;
}
</style>
